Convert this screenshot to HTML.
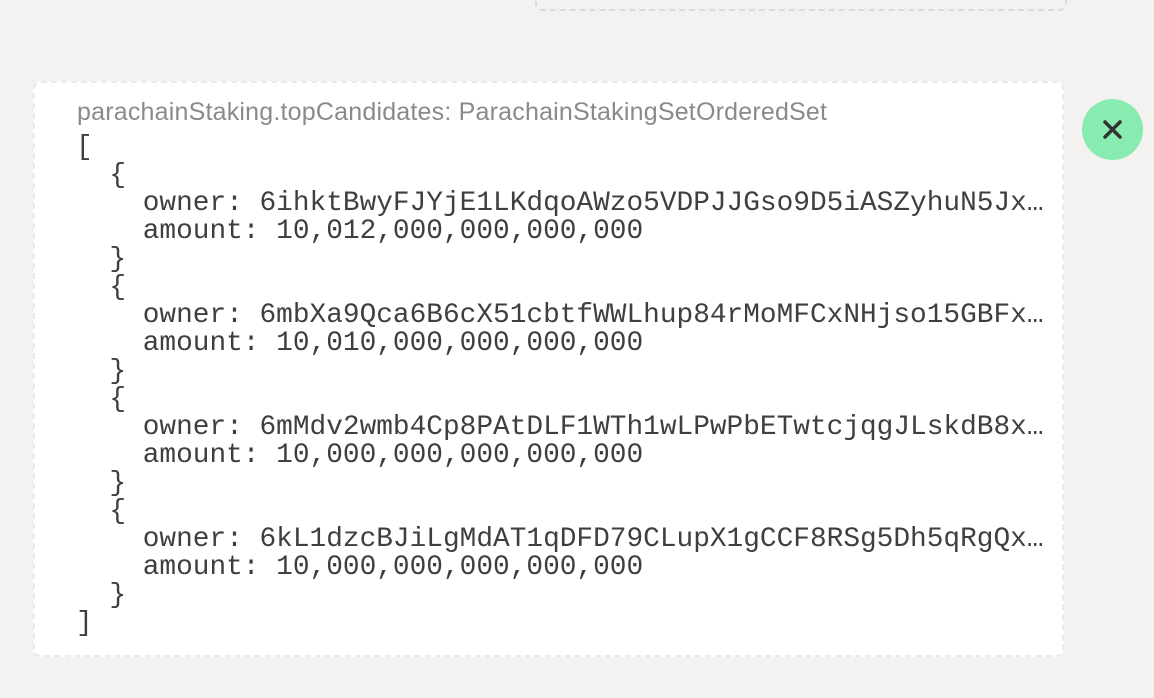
<!DOCTYPE html>
<html><head><style>
html,body{margin:0;padding:0;background:#f3f2f1;width:1154px;height:698px;overflow:hidden;position:relative}
.top{position:absolute;left:535px;top:-20px;width:528px;height:29px;border:2px dashed #dcdbda;border-radius:8px;border-top:none}
.card{position:absolute;left:33px;top:81px;width:1027px;height:572px;background:#fff;border:2px dashed #ebeae9;border-radius:8px}
.title{position:absolute;left:42px;top:15px;font-family:"Liberation Sans",sans-serif;font-size:25px;color:#8a8a8a;letter-spacing:0.2px;white-space:nowrap}
.code{position:absolute;left:41px;top:51px;width:975px;font-family:"Liberation Mono",monospace;font-size:27.8px;line-height:28px;color:#3f3f3f}
.code div{white-space:pre;overflow:hidden;text-overflow:ellipsis}
.btn{position:absolute;left:1082px;top:99px;width:61px;height:61px;border-radius:50%;background:#88ebb0}
</style></head><body>
<div class="top"></div>
<div class="card">
<div class="title">parachainStaking.topCandidates: ParachainStakingSetOrderedSet</div>
<div class="code">
<div>[</div>
<div>  {</div>
<div>    owner: 6ihktBwyFJYjE1LKdqoAWzo5VDPJJGso9D5iASZyhuN5JxYzPq</div>
<div>    amount: 10,012,000,000,000,000</div>
<div>  }</div>
<div>  {</div>
<div>    owner: 6mbXa9Qca6B6cX51cbtfWWLhup84rMoMFCxNHjso15GBFxYzPq</div>
<div>    amount: 10,010,000,000,000,000</div>
<div>  }</div>
<div>  {</div>
<div>    owner: 6mMdv2wmb4Cp8PAtDLF1WTh1wLPwPbETwtcjqgJLskdB8xYzPq</div>
<div>    amount: 10,000,000,000,000,000</div>
<div>  }</div>
<div>  {</div>
<div>    owner: 6kL1dzcBJiLgMdAT1qDFD79CLupX1gCCF8RSg5Dh5qRgQxYzPq</div>
<div>    amount: 10,000,000,000,000,000</div>
<div>  }</div>
<div>]</div>
</div>
</div>
<div class="btn"><svg width="61" height="61" viewBox="0 0 61 61"><path d="M23 23L38 38M38 23L23 38" stroke="#333" stroke-width="3.5" stroke-linecap="round"/></svg></div>
</body></html>
